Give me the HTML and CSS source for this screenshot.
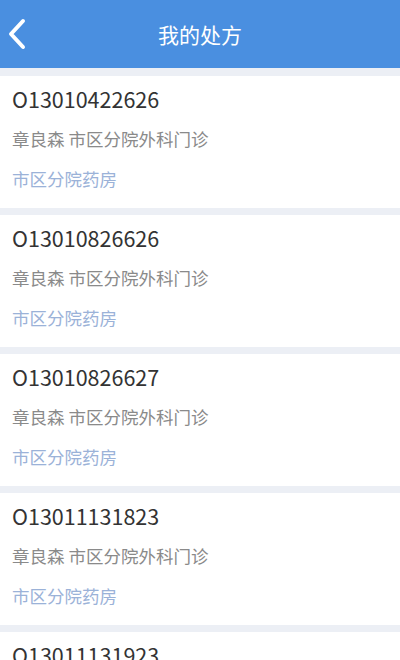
FILE: index.html
```html
<!DOCTYPE html>
<html lang="zh-CN">
<head>
    <meta charset="UTF-8">
    <meta name="viewport" content="width=device-width, initial-scale=1.0">
    <title>我的处方</title>
    <link rel="stylesheet" href="styles.css">
</head>
<body>
    <header class="topbar">
        <a class="back" href="#">
            <svg width="18" height="32" viewBox="0 0 18 32">
                <polyline points="15,3 3,16 15,29" fill="none" stroke="#fff" stroke-width="4" stroke-linecap="round" stroke-linejoin="round"/>
            </svg>
        </a>
        <h1>我的处方</h1>
    </header>

    <main class="list">
        <div class="item">
            <div class="no">O13010422626</div>
            <div class="doctor">章良森 市区分院外科门诊</div>
            <div class="pharmacy">市区分院药房</div>
        </div>
        <div class="item">
            <div class="no">O13010826626</div>
            <div class="doctor">章良森 市区分院外科门诊</div>
            <div class="pharmacy">市区分院药房</div>
        </div>
        <div class="item">
            <div class="no">O13010826627</div>
            <div class="doctor">章良森 市区分院外科门诊</div>
            <div class="pharmacy">市区分院药房</div>
        </div>
        <div class="item">
            <div class="no">O13011131823</div>
            <div class="doctor">章良森 市区分院外科门诊</div>
            <div class="pharmacy">市区分院药房</div>
        </div>
        <div class="item">
            <div class="no">O13011131923</div>
            <div class="doctor">章良森 市区分院外科门诊</div>
            <div class="pharmacy">市区分院药房</div>
        </div>
    </main>
</body>
</html>
```

FILE: styles.css
```css
body {
    font-family: 'Noto Sans CJK SC', 'Noto Sans', sans-serif;
    background-color: #eceff5;
    margin: 0;
    padding: 0;
    overflow: hidden;
}
.topbar {
    position: relative;
    height: 68px;
    background-color: #4a8fe0;
    display: flex;
    align-items: center;
    justify-content: center;
}
.topbar h1 {
    margin: 0;
    font-size: 21px;
    font-weight: normal;
    color: #fff;
}
.back {
    position: absolute;
    left: 8px;
    top: 18px;
    display: block;
}
.list {
    padding-top: 8px;
}
.item {
    background-color: #fff;
    padding: 3px 12px 9px;
    margin-bottom: 7px;
}
.no {
    height: 40px;
    line-height: 40px;
    font-size: 21.5px;
    color: #333;
}
.doctor {
    height: 40px;
    line-height: 40px;
    font-size: 17.5px;
    color: #8a8a8a;
}
.pharmacy {
    height: 40px;
    line-height: 40px;
    font-size: 17.5px;
    color: #9bb2d8;
}
```
